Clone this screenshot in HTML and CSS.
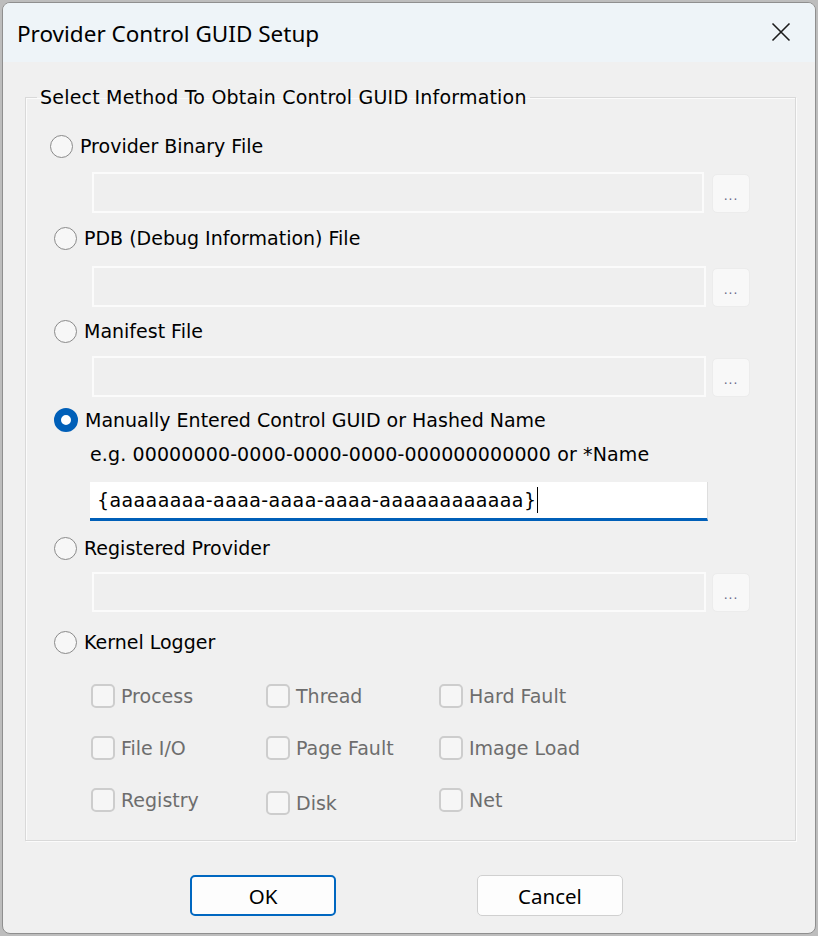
FILE: index.html
```html
<!DOCTYPE html>
<html>
<head>
<meta charset="utf-8">
<title>Provider Control GUID Setup</title>
<link rel="stylesheet" href="styles.css">
</head>
<body>
<div class="window">
  <div class="titlebar">
    <span class="title">Provider Control GUID Setup</span>
    <span class="close">
      <svg width="20" height="20" viewBox="0 0 20 20"><path d="M1.5 1.5 L18.5 18.5 M18.5 1.5 L1.5 18.5" stroke="#1b1b1b" stroke-width="1.6" fill="none"/></svg>
    </span>
  </div>
  <div class="content">
    <fieldset class="group">
      <legend class="legend">Select Method To Obtain Control GUID Information</legend>

      <div class="radio-row first"><span class="radio"></span><span class="label">Provider Binary File</span></div>
      <div class="field-row r1"><span class="field"></span><span class="browse">...</span></div>

      <div class="radio-row r2"><span class="radio"></span><span class="label">PDB (Debug Information) File</span></div>
      <div class="field-row r2f"><span class="field"></span><span class="browse">...</span></div>

      <div class="radio-row r3"><span class="radio"></span><span class="label">Manifest File</span></div>
      <div class="field-row r3f"><span class="field"></span><span class="browse">...</span></div>

      <div class="radio-row r4"><span class="radio checked"></span><span class="label">Manually Entered Control GUID or Hashed Name</span></div>
      <div class="hint">e.g. 00000000-0000-0000-0000-000000000000 or *Name</div>
      <div class="input"><span class="guid">{aaaaaaaa-aaaa-aaaa-aaaa-aaaaaaaaaaaa}</span><span class="caret"></span></div>

      <div class="radio-row r5"><span class="radio"></span><span class="label">Registered Provider</span></div>
      <div class="field-row r5f"><span class="field"></span><span class="browse">...</span></div>

      <div class="radio-row r6"><span class="radio"></span><span class="label">Kernel Logger</span></div>

      <div class="checks">
        <div class="check c1"><span class="box"></span><span>Process</span></div>
        <div class="check c2"><span class="box"></span><span>Thread</span></div>
        <div class="check c3"><span class="box"></span><span>Hard Fault</span></div>
        <div class="check c1"><span class="box"></span><span>File I/O</span></div>
        <div class="check c2"><span class="box"></span><span>Page Fault</span></div>
        <div class="check c3"><span class="box"></span><span>Image Load</span></div>
        <div class="check c1"><span class="box"></span><span>Registry</span></div>
        <div class="check c2 low"><span class="box"></span><span>Disk</span></div>
        <div class="check c3"><span class="box"></span><span>Net</span></div>
      </div>
    </fieldset>

    <div class="buttons">
      <button class="btn default">OK</button>
      <button class="btn">Cancel</button>
    </div>
  </div>
</div>
</body>
</html>
```

FILE: styles.css
```css
html, body {
  margin: 0;
  padding: 0;
}
body {
  background: #bdbdbd;
  width: 818px;
  height: 936px;
  overflow: hidden;
  font-family: "DejaVu Sans", Verdana, sans-serif;
  font-size: 19px;
  color: #000;
}
.window {
  margin: 2px;
  width: 814px;
  height: 932px;
  box-sizing: border-box;
  border: 1px solid #8f8f8f;
  border-radius: 8px;
  overflow: hidden;
  background: #f0f0f0;
}
.titlebar {
  height: 59px;
  background: #eef4f8;
  display: flex;
  align-items: center;
  justify-content: space-between;
  padding: 0 24px 0 14px;
}
.title {
  font-family: "Noto Sans", "Open Sans", sans-serif;
  font-size: 22.5px;
  color: #000;
  margin-top: 1px;
}
.close {
  display: flex;
  width: 20px;
  height: 20px;
  margin-top: -1px;
}
.content {
  padding: 24px 19px 0 22px;
}
.group {
  margin: 0;
  padding: 23px 0 26px 0;
  border: 1px solid #d9d9d9;
  box-shadow: inset 1px 1px 0 #fbfbfb, 1px 1px 0 #fbfbfb;
  height: 755px;
  box-sizing: border-box;
}
.legend {
  margin-left: 11px;
  padding: 0 3px 0 3px;
  line-height: 22px;
  height: 22px;
  letter-spacing: 0.2px;
}
.radio-row {
  display: flex;
  align-items: center;
  height: 30px;
  padding-left: 28px;
}
.radio-row.first { padding-left: 24px; }
.radio-row .label { margin-left: 7px; }
.radio {
  width: 23px;
  height: 23px;
  box-sizing: border-box;
  border: 1px solid #8a8a8a;
  border-radius: 50%;
  background: #f7f7f7;
  flex: none;
}
.radio.checked {
  border: 7px solid #005fb8;
  background: #fff;
  width: 24px;
  height: 24px;
}
.r2 { margin-top: 10px; }
.r3 { margin-top: 9px; }
.r4 { margin-top: 8px; }
.r5 { margin-top: 12px; }
.r6 { margin-top: 15px; }

.field-row {
  display: flex;
  align-items: flex-end;
  padding-left: 66px;
  height: 41px;
}
.field-row.r1 { margin-top: 11px; }
.field-row.r2f { margin-top: 13px; }
.field-row.r3f { margin-top: 10px; }
.field-row.r5f { margin-top: 9px; height: 40px; }
.field {
  width: 612px;
  height: 100%;
  box-sizing: border-box;
  border: 2px solid #fbfbfb;
  background: #efefef;
  flex: none;
}
.r2f .field, .r3f .field, .r5f .field { width: 614px; }
.browse {
  margin-left: 8px;
  width: 38px;
  height: 39px;
  box-sizing: border-box;
  border: 1px solid #ececec;
  border-radius: 5px;
  background: #f8f8f8;
  color: #6a6a8a;
  font-family: "Liberation Sans", Arial, sans-serif;
  font-size: 14px;
  line-height: 14px;
  letter-spacing: 1px;
  display: flex;
  align-items: flex-end;
  justify-content: center;
  padding-bottom: 10px;
  flex: none;
}
.r2f .browse, .r3f .browse, .r5f .browse { margin-left: 6px; }

.hint {
  margin-top: 5px;
  height: 28px;
  line-height: 28px;
  padding-left: 64px;
  letter-spacing: 0.12px;
}
.input {
  margin-top: 14px;
  margin-left: 64px;
  width: 618px;
  height: 39px;
  box-sizing: border-box;
  background: #fff;
  border-right: 1px solid #dedede;
  border-bottom: 3px solid #005fb8;
  padding-left: 7px;
  display: flex;
  align-items: center;
}
.guid {
  letter-spacing: 0.4px;
}
.caret {
  display: inline-block;
  width: 1px;
  height: 26px;
  background: #000;
  margin-left: 1px;
}
.checks {
  margin-top: 25px;
  display: grid;
  grid-template-columns: 175px 173px 200px;
  row-gap: 24px;
  padding-left: 65px;
}
.check {
  display: flex;
  align-items: center;
  height: 28px;
  color: #6d6d6d;
}
.check .box {
  width: 24px;
  height: 24px;
  box-sizing: border-box;
  border: 2px solid #cdcdcd;
  border-radius: 5px;
  background: #f6f6f6;
  margin-right: 6px;
  flex: none;
}
.check.low { margin-top: 3px; }

.buttons {
  display: flex;
  gap: 141px;
  padding-left: 165px;
  margin-top: 34px;
}
.btn {
  width: 146px;
  height: 41px;
  box-sizing: border-box;
  background: #fdfdfd;
  border: 1px solid #d0d0d0;
  border-radius: 5px;
  font-family: "Noto Sans", "Open Sans", sans-serif;
  font-size: 20.5px;
  color: #000;
  padding: 0;
}
.btn.default {
  border: 2px solid #0067c0;
}
```
